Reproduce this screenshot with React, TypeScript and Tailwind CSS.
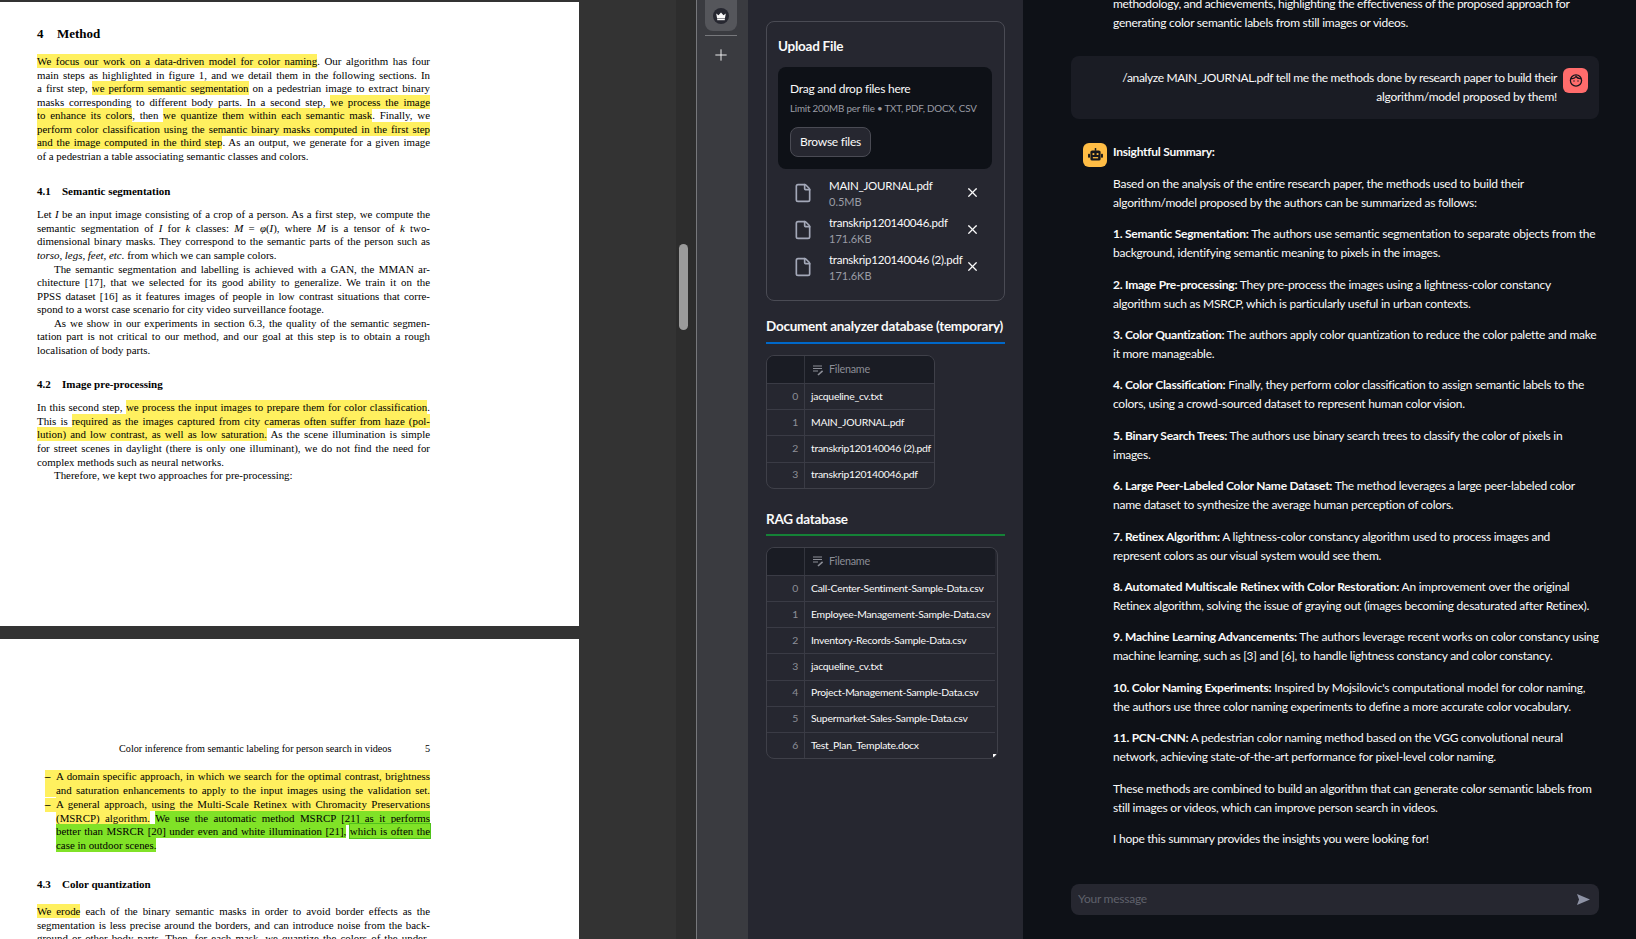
import React from 'react';
import { File, Plus, X } from 'lucide-react';

const Y: React.FC<{ children: React.ReactNode }> = ({ children }) => (
  <span className="bg-[#fff05f] py-[1px]">{children}</span>
);

const G: React.FC<{ children: React.ReactNode }> = ({ children }) => (
  <span className="bg-[#80e227] py-[1px]">{children}</span>
);

const L: React.FC<{ children: React.ReactNode; last?: boolean; indent?: boolean }> = ({ children, last, indent }) => (
  <div
    className={`h-[13.55px] leading-[13.55px] whitespace-nowrap ${last ? '' : '[text-align-last:justify]'} ${indent ? 'pl-[17px]' : ''}`}
  >
    {children}
  </div>
);

const SectionTitle: React.FC<{ num: string; title: string; gap: string }> = ({ num, title, gap }) => (
  <div className={`flex font-bold text-[11px] leading-[14px] ${gap}`}>
    <span className="w-[25px]">{num}</span>
    <span>{title}</span>
  </div>
);

const PageOne = () => (
  <div className="h-[624px] mt-[2px] bg-white pl-[37px] overflow-hidden text-black [font-family:'Liberation_Serif',serif] text-[10.9px]">
    <div className="w-[393px]">
      <div className="flex font-bold text-[13px] leading-[16px] mt-[24px]">
        <span className="w-[20px]">4</span>
        <span>Method</span>
      </div>
      <div className="mt-[13px]">
        <L><Y>We focus our work on a data-driven model for color naming</Y>. Our algorithm has four</L>
        <L>main steps as highlighted in figure 1, and we detail them in the following sections. In</L>
        <L>a first step, <Y>we perform semantic segmentation</Y> on a pedestrian image to extract binary</L>
        <L>masks corresponding to different body parts. In a second step, <Y>we process the image</Y></L>
        <L><Y>to enhance its colors</Y>, then <Y>we quantize them within each semantic mask</Y>. Finally, we</L>
        <L><Y>perform color classification using the semantic binary masks computed in the first step</Y></L>
        <L><Y>and the image computed in the third step</Y>. As an output, we generate for a given image</L>
        <L last>of a pedestrian a table associating semantic classes and colors.</L>
      </div>
      <SectionTitle num="4.1" title="Semantic segmentation" gap="mt-[21px]" />
      <div className="mt-[10px]">
        <L>Let <i>I</i> be an input image consisting of a crop of a person. As a first step, we compute the</L>
        <L>semantic segmentation of <i>I</i> for <i>k</i> classes: <i>M</i> = <i>φ</i>(<i>I</i>), where <i>M</i> is a tensor of <i>k</i> two-</L>
        <L>dimensional binary masks. They correspond to the semantic parts of the person such as</L>
        <L last><i>torso, legs, feet, etc.</i> from which we can sample colors.</L>
        <L indent>The semantic segmentation and labelling is achieved with a GAN, the MMAN ar-</L>
        <L>chitecture [17], that we selected for its good ability to generalize. We train it on the</L>
        <L>PPSS dataset [16] as it features images of people in low contrast situations that corre-</L>
        <L last>spond to a worst case scenario for city video surveillance footage.</L>
        <L indent>As we show in our experiments in section 6.3, the quality of the semantic segmen-</L>
        <L>tation part is not critical to our method, and our goal at this step is to obtain a rough</L>
        <L last>localisation of body parts.</L>
      </div>
      <SectionTitle num="4.2" title="Image pre-processing" gap="mt-[20px]" />
      <div className="mt-[10px]">
        <L>In this second step, <Y>we process the input images to prepare them for color classification</Y>.</L>
        <L>This is <Y>required as the images captured from city cameras often suffer from haze (pol-</Y></L>
        <L><Y>lution) and low contrast, as well as low saturation.</Y> As the scene illumination is simple</L>
        <L>for street scenes in daylight (there is only one illuminant), we do not find the need for</L>
        <L last>complex methods such as neural networks.</L>
        <L last indent>Therefore, we kept two approaches for pre-processing:</L>
      </div>
    </div>
  </div>
);

const PageTwo = () => (
  <div className="h-[300px] mt-[13px] bg-white pl-[37px] overflow-hidden text-black [font-family:'Liberation_Serif',serif] text-[10.9px]">
    <div className="w-[393px]">
      <div className="flex justify-between pl-[82px] mt-[103px] leading-[14px] text-[10.2px]">
        <span>Color inference from semantic labeling for person search in videos</span>
        <span>5</span>
      </div>
      <div className="mt-[14px] pl-[19px]">
        <div className="flex">
          <div className="w-[11px] -ml-[11px] h-[27.1px] leading-[13.55px] bg-[#fff05f] font-bold">–</div>
          <div className="flex-1 bg-[#fff05f]">
            <L>A domain specific approach, in which we search for the optimal contrast, brightness</L>
            <L>and saturation enhancements to apply to the input images using the validation set.</L>
          </div>
        </div>
        <div className="flex mt-[1px]">
          <div className="w-[11px] -ml-[11px] h-[13.55px] leading-[13.55px] bg-[#fff05f] font-bold">–</div>
          <div className="flex-1">
            <L><Y>A general approach, using the Multi-Scale Retinex with Chromacity Preservations</Y></L>
            <L><Y>(MSRCP) algorithm.</Y> <G>We use the automatic method MSRCP [21] as it performs</G></L>
            <L>
              <G>better than MSRCR [20] under even and white illumination [21],</G>{' '}
              <span className="bg-[#80e227] py-[1px] outline outline-1 outline-[#4fc21a]">which is often the</span>
            </L>
            <L last><G>case in outdoor scenes.</G></L>
          </div>
        </div>
      </div>
      <SectionTitle num="4.3" title="Color quantization" gap="mt-[25px]" />
      <div className="mt-[14px]">
        <L><Y>We erode</Y> each of the binary semantic masks in order to avoid border effects as the</L>
        <L>segmentation is less precise around the borders, and can introduce noise from the back-</L>
        <L>ground or other body parts. Then, for each mask, we quantize the colors of the under-</L>
      </div>
    </div>
  </div>
);

const CrownIcon = () => (
  <svg viewBox="0 0 16 16" className="w-[16px] h-[16px]">
    <circle cx="8" cy="8" r="8" fill="#262730" />
    <path d="M3.2 5.6l2.3 1.6L8 4.4l2.5 2.8 2.3-1.6-.9 5H4.1z" fill="#fafafa" />
    <rect x="4.2" y="11" width="7.6" height="1.2" fill="#fafafa" />
  </svg>
);

const FilenameIcon = () => (
  <svg viewBox="0 0 12 12" className="w-[12px] h-[12px]" fill="none" stroke="#8b8d96" strokeWidth="1.1">
    <path d="M1 2h9M1 4.5h9M1 7h5" />
    <path d="M6 11l4.6-4.2" strokeWidth="1.6" />
  </svg>
);

const FaceIcon = () => (
  <svg viewBox="0 0 16 16" className="w-[16px] h-[16px]" fill="none" stroke="#14161c" strokeWidth="1.3">
    <circle cx="8" cy="8.5" r="5.6" />
    <path d="M3 6.5c2 .4 4-.2 5-2 1 1.4 3 2.2 5 2" />
    <circle cx="6" cy="9" r=".7" fill="#14161c" stroke="none" />
    <circle cx="10" cy="9" r=".7" fill="#14161c" stroke="none" />
  </svg>
);

const BotIcon = () => (
  <svg viewBox="0 0 16 16" className="w-[17px] h-[17px]" fill="#14161c">
    <rect x="7.3" y="1" width="1.4" height="2.5" />
    <rect x="3.2" y="3.2" width="9.6" height="9.6" rx="1.6" />
    <rect x="1" y="6.4" width="1.8" height="3.6" rx=".6" />
    <rect x="13.2" y="6.4" width="1.8" height="3.6" rx=".6" />
    <rect x="5.2" y="5.8" width="1.7" height="1.7" fill="#ffbd45" />
    <rect x="9.1" y="5.8" width="1.7" height="1.7" fill="#ffbd45" />
    <rect x="5.5" y="9.5" width="5" height="1.2" fill="#ffbd45" />
  </svg>
);

const uploads = [
  { name: 'MAIN_JOURNAL.pdf', size: '0.5MB' },
  { name: 'transkrip120140046.pdf', size: '171.6KB' },
  { name: 'transkrip120140046 (2).pdf', size: '171.6KB' },
];

const DataTable: React.FC<{ rows: string[]; width: string; inner: string; resizable?: boolean }> = ({
  rows,
  width,
  inner,
  resizable,
}) => (
  <div className={`relative border border-[#3f4049] rounded-lg overflow-hidden tracking-[-0.25px] ${width}`}>
    <div className={inner}>
      <div className="flex h-[27px] bg-[#1a1c24]">
        <div className="w-[38px] shrink-0 border-r border-[#33353e]" />
        <div className="flex items-center gap-[5px] pl-[7px] text-[10.8px] text-[#8b8d96]">
          <FilenameIcon />
          Filename
        </div>
      </div>
      {rows.map((r, i) => (
        <div key={r} className="flex h-[26.2px] border-t border-[#3a3b45] items-center text-[10.4px]">
          <div className="w-[38px] shrink-0 h-full flex items-center justify-end pr-[6px] border-r border-[#3a3b45] text-[#8d8f98]">
            {i}
          </div>
          <div className="pl-[6px] text-[#fafafa] whitespace-nowrap">{r}</div>
        </div>
      ))}
    </div>
    {resizable && <div className="absolute right-0 bottom-0 w-[4px] h-[4px] bg-white" />}
  </div>
);

const Sidebar = () => (
  <div className="w-[275px] bg-[#262730] pl-[18px] text-[#fafafa] shrink-0 tracking-[-0.25px]">
    <div className="mt-[21px] w-[239px] h-[280px] border border-[#4a4b54] rounded-lg pl-[11px] pt-[14px]">
      <div className="text-[13.5px] font-bold leading-[20px]">Upload File</div>
      <div className="mt-[11px] w-[214px] h-[102px] bg-[#0e1117] rounded-lg pl-[12px] pt-[12px]">
        <div className="text-[12px] leading-[20px]">Drag and drop files here</div>
        <div className="text-[9.8px] leading-[16px] mt-[1px] text-[#9a9ca5] tracking-[-0.2px] whitespace-nowrap">
          Limit 200MB per file • TXT, PDF, DOCX, CSV
        </div>
        <div className="mt-[11px] w-[81px] h-[30px] bg-[#262730] border border-[#4a4b54] rounded-lg flex items-center justify-center text-[12px]">
          Browse files
        </div>
      </div>
      <div className="mt-[5px] pl-[15px]">
        {uploads.map((u) => (
          <div key={u.name} className="flex h-[37px] items-center">
            <File size={20} strokeWidth={2} className="text-[#a3a8b8] w-[20px] shrink-0" />
            <div className="ml-[16px] w-[136px] whitespace-nowrap">
              <div className="text-[11.5px] leading-[18px]">{u.name}</div>
              <div className="text-[11px] leading-[14px] text-[#9a9ca5] tracking-normal">{u.size}</div>
            </div>
            <X size={15} strokeWidth={2} className="text-[#fafafa]" />
          </div>
        ))}
      </div>
    </div>
    <div className="mt-[15px] text-[13.5px] font-bold leading-[20px] whitespace-nowrap">Document analyzer database (temporary)</div>
    <div className="mt-[6px] w-[239px] h-[2px] bg-[#0068c9]" />
    <div className="mt-[11px]">
      <DataTable
        width="w-[169px]"
        inner="w-full"
        rows={['jacqueline_cv.txt', 'MAIN_JOURNAL.pdf', 'transkrip120140046 (2).pdf', 'transkrip120140046.pdf']}
      />
    </div>
    <div className="mt-[20px] text-[13.5px] font-bold leading-[20px]">RAG database</div>
    <div className="mt-[5px] w-[239px] h-[2px] bg-[#158237]" />
    <div className="mt-[11px]">
      <DataTable
        width="w-[232px]"
        inner="w-[228px]"
        resizable
        rows={[
          'Call-Center-Sentiment-Sample-Data.csv',
          'Employee-Management-Sample-Data.csv',
          'Inventory-Records-Sample-Data.csv',
          'jacqueline_cv.txt',
          'Project-Management-Sample-Data.csv',
          'Supermarket-Sales-Sample-Data.csv',
          'Test_Plan_Template.docx',
        ]}
      />
    </div>
  </div>
);

const summary: { lead?: string; lines: string[] }[] = [
  {
    lines: [
      'Based on the analysis of the entire research paper, the methods used to build their',
      'algorithm/model proposed by the authors can be summarized as follows:',
    ],
  },
  {
    lead: '1. Semantic Segmentation:',
    lines: [
      ' The authors use semantic segmentation to separate objects from the',
      'background, identifying semantic meaning to pixels in the images.',
    ],
  },
  {
    lead: '2. Image Pre-processing:',
    lines: [
      ' They pre-process the images using a lightness-color constancy',
      'algorithm such as MSRCP, which is particularly useful in urban contexts.',
    ],
  },
  {
    lead: '3. Color Quantization:',
    lines: [' The authors apply color quantization to reduce the color palette and make', 'it more manageable.'],
  },
  {
    lead: '4. Color Classification:',
    lines: [
      ' Finally, they perform color classification to assign semantic labels to the',
      'colors, using a crowd-sourced dataset to represent human color vision.',
    ],
  },
  {
    lead: '5. Binary Search Trees:',
    lines: [' The authors use binary search trees to classify the color of pixels in', 'images.'],
  },
  {
    lead: '6. Large Peer-Labeled Color Name Dataset:',
    lines: [' The method leverages a large peer-labeled color', 'name dataset to synthesize the average human perception of colors.'],
  },
  {
    lead: '7. Retinex Algorithm:',
    lines: [' A lightness-color constancy algorithm used to process images and', 'represent colors as our visual system would see them.'],
  },
  {
    lead: '8. Automated Multiscale Retinex with Color Restoration:',
    lines: [' An improvement over the original', 'Retinex algorithm, solving the issue of graying out (images becoming desaturated after Retinex).'],
  },
  {
    lead: '9. Machine Learning Advancements:',
    lines: [' The authors leverage recent works on color constancy using', 'machine learning, such as [3] and [6], to handle lightness constancy and color constancy.'],
  },
  {
    lead: '10. Color Naming Experiments:',
    lines: [" Inspired by Mojsilovic's computational model for color naming,", 'the authors use three color naming experiments to define a more accurate color vocabulary.'],
  },
  {
    lead: '11. PCN-CNN:',
    lines: [' A pedestrian color naming method based on the VGG convolutional neural', 'network, achieving state-of-the-art performance for pixel-level color naming.'],
  },
  {
    lines: [
      'These methods are combined to build an algorithm that can generate color semantic labels from',
      'still images or videos, which can improve person search in videos.',
    ],
  },
  { lines: ['I hope this summary provides the insights you were looking for!'] },
];

const Chat = () => (
  <div className="flex-1 bg-[#0e1117] text-[#fafafa] flex flex-col pl-[48px] pr-[37px] pb-[24px] text-[12px] tracking-[-0.25px] leading-[18.9px] overflow-hidden">
    <div className="flex-1 overflow-hidden">
      <div className="-mt-[5px] pl-[42px] whitespace-nowrap">
        <div className="tracking-[-0.33px]">methodology, and achievements, highlighting the effectiveness of the proposed approach for</div>
        <div>generating color semantic labels from still images or videos.</div>
      </div>
      <div className="mt-[23px] h-[63px] bg-[#1a1c24] rounded-lg flex justify-end pt-[12px] pr-[11px]">
        <div className="text-right whitespace-nowrap pt-[1px]">
          <div className="tracking-[-0.35px]">/analyze MAIN_JOURNAL.pdf tell me the methods done by research paper to build their</div>
          <div>algorithm/model proposed by them!</div>
        </div>
        <div className="ml-[6px] w-[25px] h-[25px] rounded-md bg-[#ff6c6c] flex items-center justify-center shrink-0">
          <FaceIcon />
        </div>
      </div>
      <div className="mt-[24.5px] pl-[12px] flex gap-[6px]">
        <div className="w-[24px] h-[24px] rounded-md bg-[#ffbd45] flex items-center justify-center shrink-0">
          <BotIcon />
        </div>
        <div className="whitespace-nowrap">
          <p className="font-bold mb-[12.6px]">Insightful Summary:</p>
          {summary.map((p) => (
            <p key={p.lines[0]} className="mb-[12.6px]">
              {p.lead && <b>{p.lead}</b>}
              {p.lines.map((l, i) => (
                <React.Fragment key={l}>
                  {i > 0 && <br />}
                  {l}
                </React.Fragment>
              ))}
            </p>
          ))}
        </div>
      </div>
    </div>
    <div className="h-[31px] bg-[#262730] rounded-lg flex items-center pl-[7px] pr-[8px] shrink-0">
      <input
        placeholder="Your message"
        className="flex-1 bg-transparent outline-none text-[12px] placeholder:text-[#5f616b]"
      />
      <svg viewBox="0 0 16 14" className="w-[15px] h-[13px]" fill="#8e93a5">
        <path d="M1 1l14 6-14 6 2.2-6z" />
      </svg>
    </div>
  </div>
);

export default function App() {
  return (
    <div className="flex w-[1636px] h-[939px] overflow-hidden [font-family:Lato,sans-serif]">
      <div className="w-[676px] bg-[#333333] shrink-0 overflow-hidden">
        <div className="w-[579px]">
          <PageOne />
          <PageTwo />
        </div>
      </div>
      <div className="w-[20px] bg-[#2d2d2d] shrink-0 pl-[3px]">
        <div className="mt-[244px] w-[9px] h-[86px] rounded-full bg-[#9b9b9b]" />
      </div>
      <div className="w-[1px] bg-[#77787c] shrink-0" />
      <div className="w-[51px] bg-[#3a3b40] shrink-0 pl-[8px]">
        <div className="w-[32px] h-[31px] bg-[#55565b] rounded-b-lg flex items-center justify-center">
          <CrownIcon />
        </div>
        <div className="mt-[4px] w-[32px] h-[1px] bg-[#77787c]" />
        <div className="mt-[10px] w-[32px] flex justify-center">
          <Plus size={18} strokeWidth={1.2} className="text-white" />
        </div>
      </div>
      <Sidebar />
      <Chat />
    </div>
  );
}
